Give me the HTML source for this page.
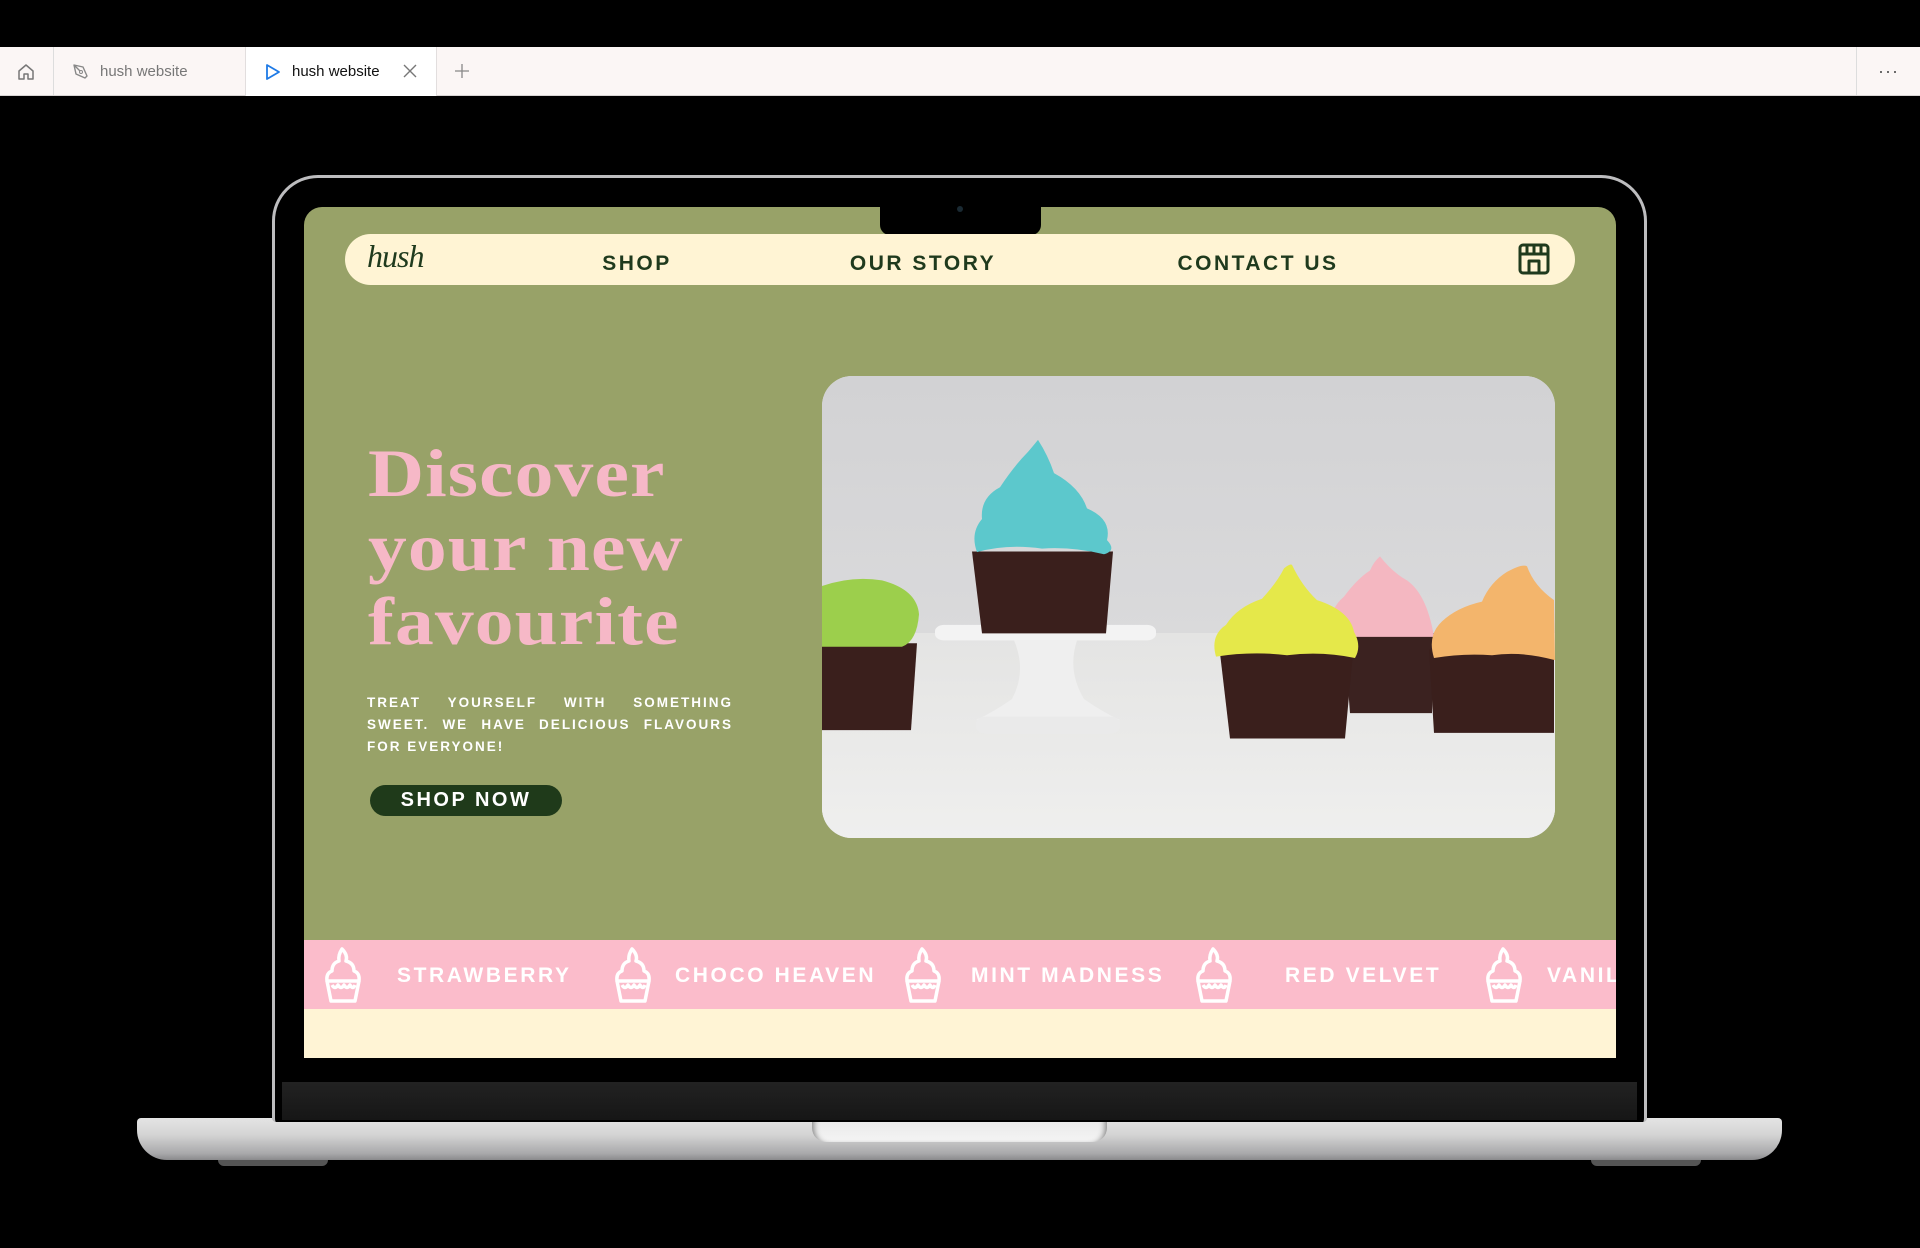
<!DOCTYPE html>
<html><head><meta charset="utf-8"><style>
*{margin:0;padding:0;box-sizing:border-box}
body{width:1920px;height:1248px;background:#000;position:relative;overflow:hidden;font-family:"Liberation Sans",sans-serif}
.abs{position:absolute}
.tabbar{left:0;top:47px;width:1920px;height:49px;background:#fbf6f5;border-bottom:1px solid #d8d4d3}
.tabtxt{font-size:15px;top:16px}
.nav a{position:absolute;top:18px;font-size:21px;font-weight:bold;letter-spacing:2.5px;color:#1f3a1d;transform:translateX(-50%);white-space:nowrap}
.band span{position:absolute;top:24px;font-size:21px;font-weight:bold;letter-spacing:2.6px;color:#fff;white-space:nowrap}
</style></head><body>
<!-- tab bar -->
<div class="abs tabbar">
  <div class="abs" style="left:53px;top:0;width:1px;height:48px;background:#ddd"></div>
  <svg class="abs" style="left:16px;top:15px" width="20" height="20" viewBox="0 0 20 20"><path d="M3 9 L10 3 L17 9 V17 H12 V12 H8 V17 H3 Z" fill="none" stroke="#777" stroke-width="1.5" stroke-linejoin="round"/></svg>
  <svg class="abs" style="left:71px;top:15px" width="20" height="20" viewBox="0 0 20 20"><path d="M3 3 L12 5 L16 14 L14 16 L5 12 Z M3 3 L9 9" fill="none" stroke="#888" stroke-width="1.4" stroke-linejoin="round"/><circle cx="10" cy="10" r="1.5" fill="none" stroke="#888"/></svg>
  <div class="abs tabtxt" style="left:100px;color:#777">hush website</div>
  <div class="abs" style="left:245px;top:0;width:192px;height:49px;background:#fff;border-left:1px solid #e2dede;border-right:1px solid #e2dede"></div>
  <svg class="abs" style="left:264px;top:15px" width="18" height="20" viewBox="0 0 18 20"><path d="M3 3 L15 10 L3 17 Z" fill="none" stroke="#1e7ae6" stroke-width="1.8" stroke-linejoin="round"/></svg>
  <div class="abs tabtxt" style="left:292px;color:#111">hush website</div>
  <svg class="abs" style="left:402px;top:16px" width="16" height="16" viewBox="0 0 16 16"><path d="M2 2 L14 14 M14 2 L2 14" stroke="#777" stroke-width="1.4"/></svg>
  <svg class="abs" style="left:454px;top:16px" width="16" height="16" viewBox="0 0 16 16"><path d="M8 1 V15 M1 8 H15" stroke="#888" stroke-width="1.3"/></svg>
  <div class="abs" style="left:1856px;top:0;width:1px;height:48px;background:#ddd"></div>
  <div class="abs" style="left:1878px;top:14px;font-size:18px;color:#555;letter-spacing:1px">&middot;&middot;&middot;</div>
</div>

<!-- laptop -->
<div class="abs" style="left:137px;top:1118px;width:1645px;height:42px;border-radius:4px 4px 30px 30px;background:linear-gradient(#e4e4e4,#d4d4d4 40%,#a8a8aa 85%,#8a8a8c)"></div>
<div class="abs" style="left:812px;top:1118px;width:295px;height:24px;border-radius:0 0 14px 14px;background:linear-gradient(#e8e8e8,#f4f4f4);box-shadow:inset 6px 0 6px -4px #888,inset -6px 0 6px -4px #888"></div>
<div class="abs" style="left:218px;top:1160px;width:110px;height:6px;background:#555;border-radius:0 0 6px 6px"></div>
<div class="abs" style="left:1591px;top:1160px;width:110px;height:6px;background:#555;border-radius:0 0 6px 6px"></div>
<div class="abs" style="left:272px;top:175px;width:1375px;height:947px;border-radius:46px 46px 4px 4px;background:#000;border:3px solid #bdbdbf;border-bottom:none"></div>
<div class="abs" style="left:282px;top:1082px;width:1355px;height:38px;background:linear-gradient(#222,#161616)"></div>

<!-- screen -->
<div class="abs" style="left:304px;top:207px;width:1312px;height:851px;border-radius:18px 18px 0 0;background:#98a268;overflow:hidden">
  <div class="abs" style="left:0;top:733px;width:1312px;height:69px;background:#fbbccb"></div>
  <div class="abs" style="left:0;top:802px;width:1312px;height:49px;background:#fff4d5"></div>
</div>
<!-- notch -->
<div class="abs" style="left:880px;top:200px;width:161px;height:35px;background:#000;border-radius:0 0 10px 10px"></div>
<div class="abs" style="left:957px;top:206px;width:6px;height:6px;border-radius:50%;background:#1a2a33"></div>

<!-- nav -->
<div class="abs nav" style="left:345px;top:234px;width:1230px;height:51px;background:#fff4d4;border-radius:26px">
  <div class="abs" style="left:22px;top:4px;font-family:'Liberation Serif',serif;font-style:italic;font-size:32px;color:#1f3a1d;letter-spacing:-1px">hush</div>
  <a style="left:292px">SHOP</a>
  <a style="left:578px">OUR STORY</a>
  <a style="left:913px">CONTACT US</a>
  <svg class="abs" style="left:1172px;top:8px" width="34" height="34" viewBox="0 0 34 34"><g fill="none" stroke="#1f3a1d" stroke-width="3" stroke-linejoin="round"><rect x="3" y="3" width="28" height="28" rx="3"/><path d="M3 12 H31 M10 3 V12 M17 3 V12 M24 3 V12 M12 31 V19 H22 V31"/></g></svg>
</div>

<!-- hero text -->
<div class="abs" style="left:368px;top:436px;font-family:'Liberation Serif',serif;font-weight:bold;font-size:68px;line-height:74px;color:#f6b8c7;letter-spacing:1px;transform:scaleX(1.14);transform-origin:0 0;white-space:nowrap">Discover<br>your new<br>favourite</div>
<div class="abs" style="left:367px;top:692px;width:366px;font-size:13.5px;line-height:22px;letter-spacing:2px;color:#fff;text-align:justify;font-weight:bold">TREAT YOURSELF WITH SOMETHING SWEET. WE HAVE DELICIOUS FLAVOURS FOR EVERYONE!</div>
<div class="abs" style="left:370px;top:785px;width:192px;height:31px;border-radius:16px;background:#1f3a1a;color:#fff;font-size:20px;font-weight:bold;letter-spacing:2.5px;text-align:center;line-height:31px">SHOP NOW</div>

<!-- hero image -->
<div class="abs" style="left:822px;top:376px;width:733px;height:462px;border-radius:30px;overflow:hidden;background:#dcdcde">
<svg width="733" height="462" viewBox="0 0 733 462">
<defs><linearGradient id="bg" x1="0" y1="0" x2="0" y2="1"><stop offset="0" stop-color="#d2d2d4"/><stop offset="1" stop-color="#e0e0e1"/></linearGradient>
<linearGradient id="fl" x1="0" y1="0" x2="0" y2="1"><stop offset="0" stop-color="#e4e4e3"/><stop offset="1" stop-color="#efefee"/></linearGradient></defs>
<rect width="733" height="462" fill="url(#bg)"/>
<rect y="257" width="733" height="205" fill="url(#fl)"/>
<g transform="translate(0,-1.76) scale(1,0.706)">
<!-- stand -->
<rect x="113" y="355" width="221" height="22" rx="9" fill="#f3f3f3"/>
<path d="M192 377 H255 Q245 420 262 460 Q280 478 298 490 H154 Q172 478 190 460 Q205 420 192 377Z" fill="#efefef"/>
<rect x="154" y="485" width="144" height="24" rx="10" fill="#eaeaea"/>
<!-- green -->
<path d="M0 381 L95 381 L89 504 L0 504Z" fill="#3a1f1c"/>
<path d="M0 300 Q30 285 60 292 Q95 305 97 340 Q95 378 80 386 H0Z" fill="#9ccf4c"/>
<!-- blue -->
<path d="M150 251 L291 251 L284 367 L160 367Z" fill="#3a1f1c"/>
<path d="M155 252 Q148 225 160 205 Q158 175 178 160 Q192 130 206 110 Q212 100 216 93 Q226 115 232 140 Q258 160 265 190 Q290 205 285 235 Q295 250 282 255 Q250 244 220 247 Q185 240 155 252Z" fill="#5cc8cc"/>
<!-- pink -->
<path d="M522 367 L612 367 L610 480 L528 480Z" fill="#3b2220"/>
<path d="M508 372 Q505 335 522 315 Q535 290 548 278 Q552 265 558 258 Q570 280 585 292 Q605 312 612 372Z" fill="#f4b7c1"/>
<!-- yellow -->
<path d="M398 395 L531 395 L523 516 L408 516Z" fill="#3a1f1c"/>
<path d="M394 400 Q388 370 404 355 Q415 330 440 318 Q455 295 462 275 Q468 268 470 270 Q480 300 495 320 Q528 335 532 365 Q540 385 533 402 Q500 392 465 398 Q430 392 394 400Z" fill="#e5e84a"/>
<!-- orange -->
<path d="M607 390 L732 390 L732 508 L612 508Z" fill="#3a1f1c"/>
<path d="M612 402 Q605 370 620 350 Q635 330 660 322 Q668 295 685 280 Q700 268 705 272 Q712 300 732 320 L733 405 Q700 392 670 398 Q640 395 612 402Z" fill="#f3b56c"/>
</g>
</svg></div>

<!-- band -->
<div class="abs band" style="left:304px;top:940px;width:1312px;height:69px;overflow:hidden">
  <svg width="0" height="0" style="position:absolute"><defs><g id="cc" fill="none" stroke="#fff" stroke-width="3.5" stroke-linejoin="round"><path d="M20 4 Q26 10 24 16 Q32 18 32 26 Q38 28 37 36 H5 Q4 28 10 26 Q10 18 17 16 Q16 10 20 4Z"/><path d="M5 36 L9 56 H33 L37 36"/><path d="M10 40 Q13 45 16 40 Q19 45 22 40 Q25 45 28 40 Q31 45 33 40"/></g></defs></svg>
  <svg class="abs" style="left:18px;top:5px" width="42" height="60"><use href="#cc"/></svg>
  <span style="left:93px">STRAWBERRY</span>
  <svg class="abs" style="left:308px;top:5px" width="42" height="60"><use href="#cc"/></svg>
  <span style="left:371px">CHOCO HEAVEN</span>
  <svg class="abs" style="left:598px;top:5px" width="42" height="60"><use href="#cc"/></svg>
  <span style="left:667px">MINT MADNESS</span>
  <svg class="abs" style="left:889px;top:5px" width="42" height="60"><use href="#cc"/></svg>
  <span style="left:981px">RED VELVET</span>
  <svg class="abs" style="left:1179px;top:5px" width="42" height="60"><use href="#cc"/></svg>
  <span style="left:1243px">VANILLA</span>
</div>
</body></html>
